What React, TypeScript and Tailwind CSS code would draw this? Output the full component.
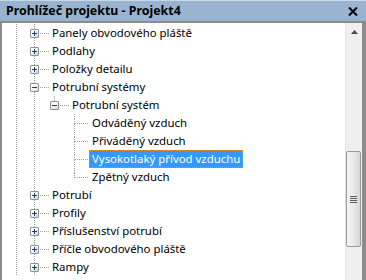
import React from "react";

type Row = {
  level: number;
  label: string;
  exp?: "plus" | "minus";
  last?: boolean;
  selected?: boolean;
};

const rows: Row[] = [
  { level: 1, label: "Panely obvodového pláště", exp: "plus" },
  { level: 1, label: "Podlahy", exp: "plus" },
  { level: 1, label: "Položky detailu", exp: "plus" },
  { level: 1, label: "Potrubní systémy", exp: "minus" },
  { level: 2, label: "Potrubní systém", exp: "minus", last: true },
  { level: 3, label: "Odváděný vzduch" },
  { level: 3, label: "Přiváděný vzduch" },
  { level: 3, label: "Vysokotlaký přívod vzduchu", selected: true },
  { level: 3, label: "Zpětný vzduch", last: true },
  { level: 1, label: "Potrubí", exp: "plus" },
  { level: 1, label: "Profily", exp: "plus" },
  { level: 1, label: "Příslušenství potrubí", exp: "plus" },
  { level: 1, label: "Příčle obvodového pláště", exp: "plus" },
  { level: 1, label: "Rampy", exp: "plus" },
];

const V =
  "w-px bg-[image:repeating-linear-gradient(to_bottom,#a0a0a0_0px,#a0a0a0_1px,transparent_1px,transparent_2px)]";
const H =
  "h-px bg-[image:repeating-linear-gradient(to_right,#a0a0a0_0px,#a0a0a0_1px,transparent_1px,transparent_2px)]";

function AncestorCell({ line, width }: { line: boolean; width: "w-[22px]" | "w-[20px]" }) {
  return (
    <div className={`flex h-full shrink-0 ${width}`}>
      <div className={width === "w-[22px]" ? "w-[14px] shrink-0" : "w-[10px] shrink-0"} />
      {line ? <div className={`h-full ${V}`} /> : null}
    </div>
  );
}

function ExpBox({ kind }: { kind: "plus" | "minus" }) {
  return (
    <div className="w-[9px] h-[9px] border border-[#919191] rounded-[1px] bg-[linear-gradient(135deg,#ffffff_30%,#d8d8d8_100%)] flex items-center justify-center">
      <svg width="7" height="7" viewBox="0 0 7 7" className="block">
        <rect x="1" y="3" width="5" height="1" fill="#1f3a8a" />
        {kind === "plus" ? <rect x="3" y="1" width="1" height="5" fill="#1f3a8a" /> : null}
      </svg>
    </div>
  );
}

function Connector({ exp, last }: { exp?: "plus" | "minus"; last?: boolean }) {
  return (
    <div className="grid grid-cols-[6px_9px_1fr] grid-rows-[5px_9px_1fr] w-[25px] h-full shrink-0">
      <div />
      <div className="flex justify-center">
        <div className={`h-full ${V}`} />
      </div>
      <div />
      <div />
      {exp ? (
        <ExpBox kind={exp} />
      ) : (
        <div className="grid grid-cols-[4px_1px_4px] grid-rows-[4px_1px_4px]">
          <div />
          <div className={V} />
          <div />
          <div />
          <div className="bg-[#a0a0a0]" />
          <div className={`self-center ${H} w-full`} />
          <div />
          <div className={last ? "" : V} />
          <div />
        </div>
      )}
      <div className="flex flex-col">
        <div className="h-[4px]" />
        <div className={`${H} ${exp ? "ml-[1px]" : ""}`} />
      </div>
      <div />
      <div className="flex justify-center">{!last ? <div className={`h-full ${V}`} /> : null}</div>
      <div />
    </div>
  );
}

function TreeRow({ row }: { row: Row }) {
  const cells: React.ReactNode[] = [];
  cells.push(<AncestorCell key="a0" line width="w-[22px]" />);
  if (row.level >= 2) cells.push(<AncestorCell key="a1" line width="w-[20px]" />);
  if (row.level >= 3) cells.push(<AncestorCell key="a2" line={false} width="w-[20px]" />);
  return (
    <div className="flex h-[18px] items-stretch">
      {cells}
      <Connector exp={row.exp} last={row.last} />
      <div className="flex items-center">
        <span
          className={
            row.selected
              ? "h-[18px] flex items-center px-[2px] bg-[#3399ff] text-white border border-dotted border-[#e08a2e] whitespace-nowrap"
              : "h-[18px] flex items-center px-[3px] text-black whitespace-nowrap"
          }
        >
          {row.label}
        </span>
      </div>
    </div>
  );
}

function Scrollbar() {
  return (
    <div className="w-[17px] shrink-0 h-full bg-[#efefef] border-l border-[#e6e6e6] flex flex-col">
      <div className="h-[17px] flex items-center justify-center shrink-0">
        <svg width="7" height="4" viewBox="0 0 7 4" className="block">
          <polygon points="3.5,0 7,4 0,4" fill="#4a4a4a" />
        </svg>
      </div>
      <div className="h-[111px] shrink-0" />
      <div className="h-[96px] shrink-0 w-[15px] rounded-[2px] border border-[#9a9a9a] bg-[linear-gradient(to_right,#f4f4f4_0%,#e9e9e9_50%,#d6d6d6_100%)] flex flex-col items-center justify-center gap-[1px]">
        <div className="w-[7px] h-px bg-[#5c5c5c]" />
        <div className="w-[7px] h-px bg-[#5c5c5c]" />
        <div className="w-[7px] h-px bg-[#5c5c5c]" />
        <div className="w-[7px] h-px bg-[#5c5c5c]" />
      </div>
      <div className="flex-1" />
    </div>
  );
}

export default function App() {
  return (
    <div className="w-[366px] h-[280px] overflow-hidden flex flex-col bg-white font-['Noto_Sans',sans-serif] text-[11.4px] leading-none">
      <div className="h-[21px] shrink-0 bg-[#99b4d1] border-t border-[#c9d7e6] flex items-center justify-between pl-[6px] pr-[8px]">
        <span className="font-bold text-black text-[12.4px]">Prohlížeč projektu - Projekt4</span>
        <svg width="10" height="9" viewBox="0 0 10 9" className="block">
          <path d="M1 0.5 L9 8.5 M9 0.5 L1 8.5" stroke="#000" strokeWidth="2" />
        </svg>
      </div>
      <div className="flex-1 flex border-t-2 border-[#8c8c8c] min-h-0">
        <div className="w-[2px] shrink-0 bg-[#8c8c8c]" />
        <div className="flex-1 flex flex-col pt-px overflow-hidden">
          {rows.map((r, i) => (
            <TreeRow key={i} row={r} />
          ))}
        </div>
        <Scrollbar />
        <div className="w-[4px] shrink-0 bg-[#8c8c8c]" />
      </div>
    </div>
  );
}
